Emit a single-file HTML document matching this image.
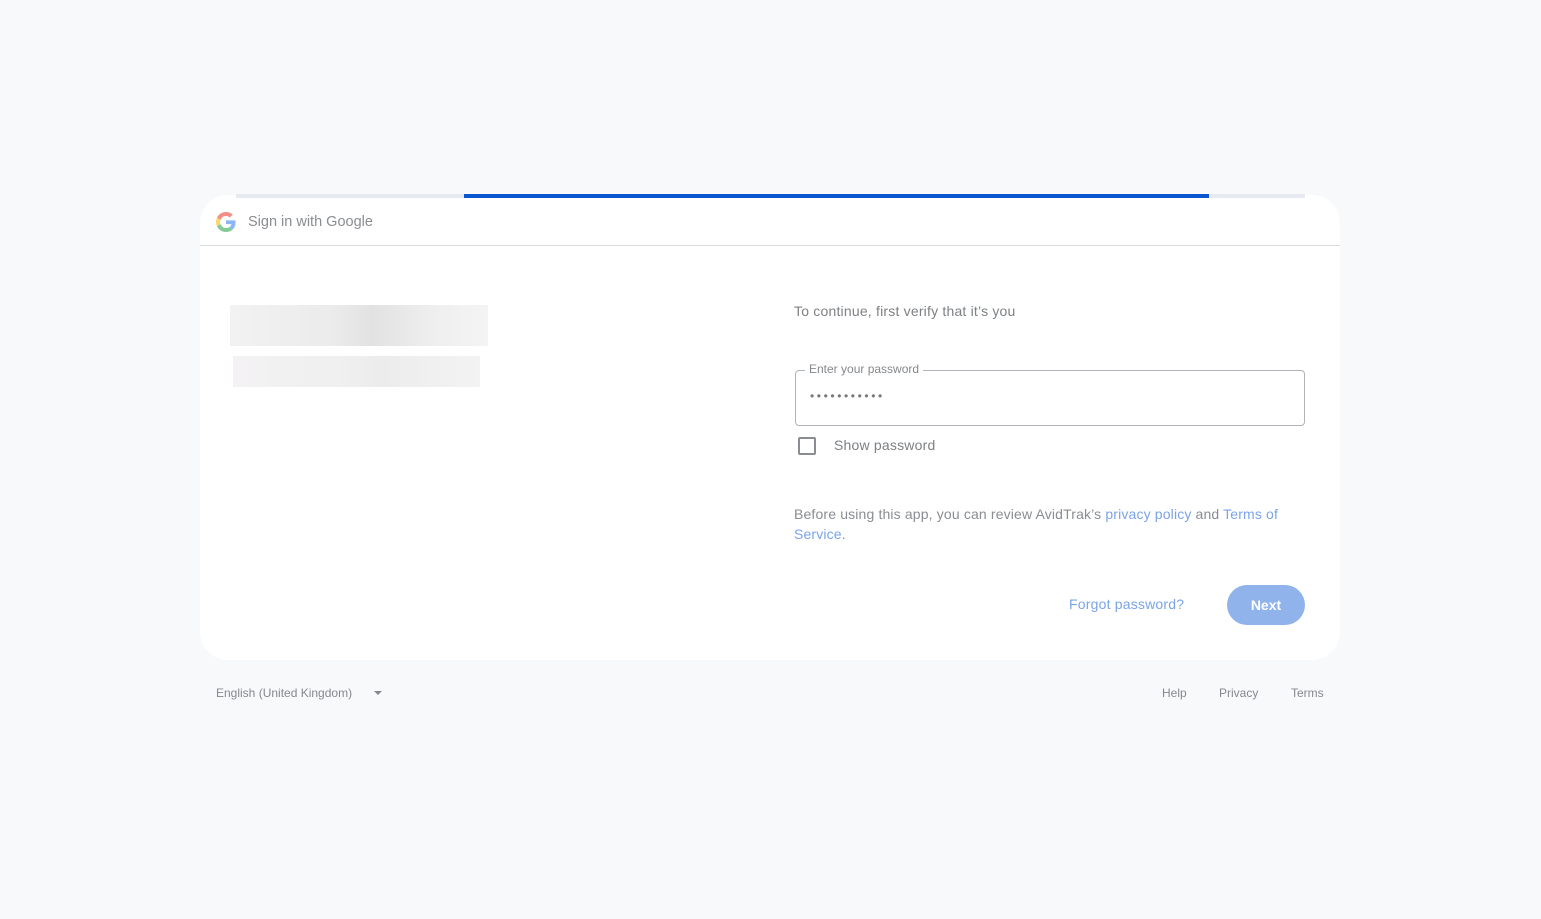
<!DOCTYPE html>
<html><head><style>
body{margin:0;width:1541px;height:919px;background:#f8f9fb;font-family:"Liberation Sans",Arial,sans-serif;position:relative;overflow:hidden;color:#80868b}
.card{position:absolute;left:200px;top:195px;width:1140px;height:465px;background:#fff;border-radius:28px;overflow:hidden}
.track{position:absolute;left:236px;top:194px;width:1069px;height:4px;background:#e8eaf2}
.bar{position:absolute;left:464px;top:194px;width:745px;height:4px;background:#0b57d0}
.hdr{position:absolute;left:0;top:0;width:1140px;height:50px;border-bottom:1px solid #dadce0}
.a{position:absolute;white-space:nowrap}
.blue{color:#7ba4e6}
</style></head><body>
<div class="card">
 <div class="hdr"></div>
 <svg class="a" style="left:16px;top:17px" width="20" height="20" viewBox="0 0 48 48" opacity="0.6"><path fill="#EA4335" d="M24 9.5c3.54 0 6.71 1.22 9.21 3.6l6.85-6.850C35.9 2.38 30.47 0 24 0 14.62 0 6.51 5.38 2.56 13.22l7.980 6.19C12.43 13.72 17.74 9.5 24 9.5z"/><path fill="#4285F4" d="M46.98 24.55c0-1.57-.15-3.090-.38-4.55H24v9.02h12.94c-.58 2.96-2.26 5.48-4.78 7.18l7.73 6c4.51-4.18 7.09-10.36 7.09-17.65z"/><path fill="#FBBC05" d="M10.53 28.59c-.48-1.45-.76-2.99-.76-4.59s.27-3.14.76-4.59l-7.98-6.19C.92 16.46 0 20.12 0 24c0 3.88.92 7.54 2.56 10.78l7.970-6.19z"/><path fill="#34A853" d="M24 48c6.48 0 11.93-2.13 15.89-5.81l-7.73-6c-2.15 1.45-4.92 2.3-8.16 2.3-6.26 0-11.57-4.22-13.47-9.91l-7.98 6.19C6.51 42.62 14.62 48 24 48z"/></svg>
 <div class="a" style="left:48px;top:19px;font-size:14.5px;color:#8a8d91">Sign in with Google</div>
 <div class="a" style="left:30px;top:110px;width:258px;height:41px;background:linear-gradient(90deg,#f3f2f3,#ebebeb 40%,#e2e2e2 55%,#efefef 80%,#f4f4f4)"></div>
 <div class="a" style="left:33px;top:161px;width:247px;height:31px;background:linear-gradient(90deg,#f4f2f4,#f0f0f0 40%,#ececec 60%,#f3f3f3)"></div>
 <div class="a" style="left:594px;top:108px;font-size:14px;letter-spacing:0.2px;color:#7d8084">To continue, first verify that it’s you</div>
 <div class="a" style="left:595px;top:175px;width:508px;height:54px;border:1px solid #b0b3b7;border-radius:4px"></div>
 <div class="a" style="left:605px;top:167px;padding:0 4px;background:#fff;font-size:12px;color:#85888c">Enter your password</div>
 <div class="a" style="left:610px;top:194px;font-size:12px;letter-spacing:2.6px;color:#777">•••••••••••</div>
 <div class="a" style="left:598px;top:242px;width:14px;height:14px;border:2px solid #8a8d91;border-radius:2px"></div>
 <div class="a" style="left:634px;top:242px;font-size:14px;letter-spacing:0.2px;color:#7d8084">Show password</div>
 <div class="a" style="left:594px;top:309px;font-size:14px;letter-spacing:0.15px;line-height:20px;color:#8a8d91">Before using this app, you can review AvidTrak’s <span class="blue">privacy policy</span> and <span class="blue">Terms of</span><br><span class="blue">Service</span>.</div>
 <div class="a blue" style="left:869px;top:401px;font-size:14px;letter-spacing:0.2px">Forgot password?</div>
 <div class="a" style="left:1027px;top:390px;width:78px;height:40px;border-radius:20px;background:#8fb3ea;color:#fff;font-weight:bold;font-size:14px;text-align:center;line-height:40px">Next</div>
</div>
<div class="track"></div><div class="bar"></div>
<div class="a" style="left:216px;top:686px;font-size:12px;color:#85888c">English (United Kingdom)</div>
<div class="a" style="left:374px;top:691px;width:0;height:0;border-left:4px solid transparent;border-right:4px solid transparent;border-top:4px solid #85888c"></div>
<div class="a" style="left:1162px;top:686px;font-size:12px;color:#85888c">Help</div>
<div class="a" style="left:1219px;top:686px;font-size:12px;color:#85888c">Privacy</div>
<div class="a" style="left:1291px;top:686px;font-size:12px;color:#85888c">Terms</div>
</body></html>
